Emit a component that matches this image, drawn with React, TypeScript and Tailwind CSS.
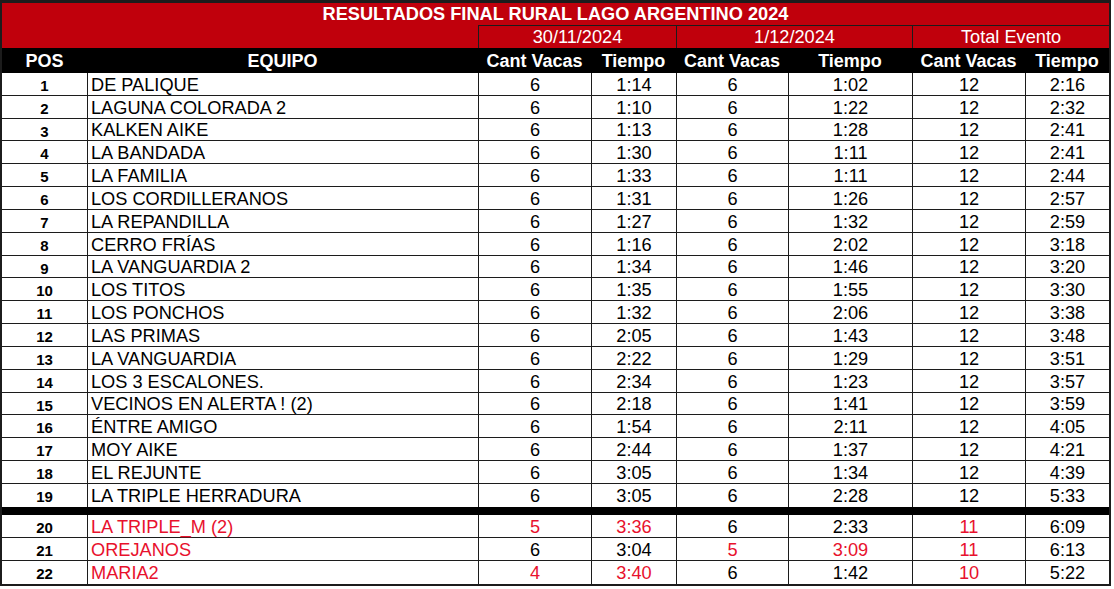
import React from "react";

type Row = {
  pos: number;
  team: string;
  v1: string;
  t1: string;
  v2: string;
  t2: string;
  vt: string;
  tt: string;
  red?: string[]; // keys painted red
};

const rows: Row[] = [
  { pos: 1, team: "DE PALIQUE", v1: "6", t1: "1:14", v2: "6", t2: "1:02", vt: "12", tt: "2:16" },
  { pos: 2, team: "LAGUNA COLORADA 2", v1: "6", t1: "1:10", v2: "6", t2: "1:22", vt: "12", tt: "2:32" },
  { pos: 3, team: "KALKEN AIKE", v1: "6", t1: "1:13", v2: "6", t2: "1:28", vt: "12", tt: "2:41" },
  { pos: 4, team: "LA BANDADA", v1: "6", t1: "1:30", v2: "6", t2: "1:11", vt: "12", tt: "2:41" },
  { pos: 5, team: "LA FAMILIA", v1: "6", t1: "1:33", v2: "6", t2: "1:11", vt: "12", tt: "2:44" },
  { pos: 6, team: "LOS CORDILLERANOS", v1: "6", t1: "1:31", v2: "6", t2: "1:26", vt: "12", tt: "2:57" },
  { pos: 7, team: "LA REPANDILLA", v1: "6", t1: "1:27", v2: "6", t2: "1:32", vt: "12", tt: "2:59" },
  { pos: 8, team: "CERRO FRÍAS", v1: "6", t1: "1:16", v2: "6", t2: "2:02", vt: "12", tt: "3:18" },
  { pos: 9, team: "LA VANGUARDIA 2", v1: "6", t1: "1:34", v2: "6", t2: "1:46", vt: "12", tt: "3:20" },
  { pos: 10, team: "LOS TITOS", v1: "6", t1: "1:35", v2: "6", t2: "1:55", vt: "12", tt: "3:30" },
  { pos: 11, team: "LOS PONCHOS", v1: "6", t1: "1:32", v2: "6", t2: "2:06", vt: "12", tt: "3:38" },
  { pos: 12, team: "LAS PRIMAS", v1: "6", t1: "2:05", v2: "6", t2: "1:43", vt: "12", tt: "3:48" },
  { pos: 13, team: "LA VANGUARDIA", v1: "6", t1: "2:22", v2: "6", t2: "1:29", vt: "12", tt: "3:51" },
  { pos: 14, team: "LOS 3 ESCALONES.", v1: "6", t1: "2:34", v2: "6", t2: "1:23", vt: "12", tt: "3:57" },
  { pos: 15, team: "VECINOS EN ALERTA ! (2)", v1: "6", t1: "2:18", v2: "6", t2: "1:41", vt: "12", tt: "3:59" },
  { pos: 16, team: "ÉNTRE AMIGO", v1: "6", t1: "1:54", v2: "6", t2: "2:11", vt: "12", tt: "4:05" },
  { pos: 17, team: "MOY AIKE", v1: "6", t1: "2:44", v2: "6", t2: "1:37", vt: "12", tt: "4:21" },
  { pos: 18, team: "EL REJUNTE", v1: "6", t1: "3:05", v2: "6", t2: "1:34", vt: "12", tt: "4:39" },
  { pos: 19, team: "LA TRIPLE HERRADURA", v1: "6", t1: "3:05", v2: "6", t2: "2:28", vt: "12", tt: "5:33" },
];

const penalized: Row[] = [
  { pos: 20, team: "LA TRIPLE_M (2)", v1: "5", t1: "3:36", v2: "6", t2: "2:33", vt: "11", tt: "6:09", red: ["team", "v1", "t1", "vt"] },
  { pos: 21, team: "OREJANOS", v1: "6", t1: "3:04", v2: "5", t2: "3:09", vt: "11", tt: "6:13", red: ["team", "v2", "t2", "vt"] },
  { pos: 22, team: "MARIA2", v1: "4", t1: "3:40", v2: "6", t2: "1:42", vt: "10", tt: "5:22", red: ["team", "v1", "t1", "vt"] },
];

const cols = "grid grid-cols-[85px_391px_113px_85px_112px_124px_113px_84px]";

const DataRow: React.FC<{ row: Row; last?: boolean; tall?: boolean }> = ({ row, last, tall }) => {
  const c = (key: string) => (row.red?.includes(key) ? "text-[#e8112d]" : "text-black");
  return (
    <div
      className={`${cols} ${tall ? "h-[23px]" : "h-[22.84px]"} ${
        last ? "" : "border-b border-[#1c1c1c]"
      } text-[18.2px] leading-none`}
    >
      <div className="flex items-center justify-center pt-[3px] font-bold text-[15px] text-black">{row.pos}</div>
      <div className={`flex items-center border-l border-[#1c1c1c] pl-[3px] pt-[2px] ${c("team")}`}>{row.team}</div>
      <div className={`flex items-center justify-center border-l border-[#1c1c1c] pt-[2px] ${c("v1")}`}>{row.v1}</div>
      <div className={`flex items-center justify-center border-l border-[#1c1c1c] pt-[2px] ${c("t1")}`}>{row.t1}</div>
      <div className={`flex items-center justify-center border-l border-[#1c1c1c] pt-[2px] ${c("v2")}`}>{row.v2}</div>
      <div className={`flex items-center justify-center border-l border-[#1c1c1c] pt-[2px] ${c("t2")}`}>{row.t2}</div>
      <div className={`flex items-center justify-center border-l border-[#1c1c1c] pt-[2px] ${c("vt")}`}>{row.vt}</div>
      <div className={`flex items-center justify-center border-l border-[#1c1c1c] pt-[2px] ${c("tt")}`}>{row.tt}</div>
    </div>
  );
};

const App: React.FC = () => {
  return (
    <div className="w-[1114px] h-[589px] bg-white font-['Liberation_Sans',Arial,sans-serif]">
      <div className="w-[1111px] border-2 border-[#1c1c1c] border-t-[3px]">
        {/* Title */}
        <div className="h-[22px] bg-[#c0000c] flex items-center justify-center text-white font-bold text-[18.2px] leading-none">
          RESULTADOS FINAL RURAL LAGO ARGENTINO 2024
        </div>

        {/* Dates */}
        <div className={`${cols} h-[23px] bg-[#c0000c] text-white text-[18.2px] leading-none`}>
          <div className="col-span-2" />
          <div className="col-span-2 flex items-center justify-center border-l border-t border-[#1c1c1c]">
            30/11/2024
          </div>
          <div className="col-span-2 flex items-center justify-center border-l border-t border-[#1c1c1c]">
            1/12/2024
          </div>
          <div className="col-span-2 flex items-center justify-center border-l border-t border-[#1c1c1c]">
            Total Evento
          </div>
        </div>

        {/* Column headers */}
        <div className={`${cols} h-[25px] bg-black text-white font-bold text-[18px] leading-none`}>
          <div className="flex items-center justify-center">POS</div>
          <div className="flex items-center justify-center">EQUIPO</div>
          <div className="flex items-center justify-center">Cant Vacas</div>
          <div className="flex items-center justify-center">Tiempo</div>
          <div className="flex items-center justify-center">Cant Vacas</div>
          <div className="flex items-center justify-center">Tiempo</div>
          <div className="flex items-center justify-center">Cant Vacas</div>
          <div className="flex items-center justify-center">Tiempo</div>
        </div>

        {rows.map((r, i) => (
          <DataRow key={r.pos} row={r} last={i === rows.length - 1} />
        ))}

        {/* separator */}
        <div className="h-[8px] bg-black" />

        {penalized.map((r, i) => (
          <DataRow key={r.pos} row={r} tall last={i === penalized.length - 1} />
        ))}
      </div>
    </div>
  );
};

export default App;
